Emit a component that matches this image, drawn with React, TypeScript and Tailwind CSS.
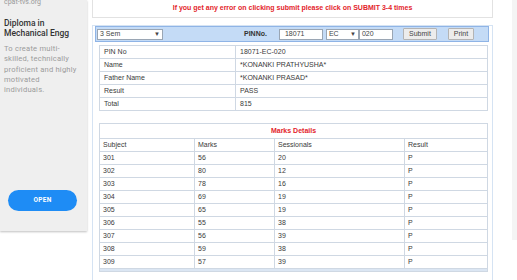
import React from "react";

const marks = [
  ["301", "56", "20", "P"],
  ["302", "80", "12", "P"],
  ["303", "78", "16", "P"],
  ["304", "69", "19", "P"],
  ["305", "65", "19", "P"],
  ["306", "55", "38", "P"],
  ["307", "56", "39", "P"],
  ["308", "59", "38", "P"],
  ["309", "57", "39", "P"],
];

const info = [
  ["PIN No", "18071-EC-020"],
  ["Name", "*KONANKI PRATHYUSHA*"],
  ["Father Name", "*KONANKI PRASAD*"],
  ["Result", "PASS"],
  ["Total", "815"],
];

export default function App() {
  return (
    <div
      className="w-[517px] h-[280px] bg-white flex overflow-hidden"
      style={{ fontFamily: '"Liberation Sans", Arial, sans-serif' }}
    >
      {/* Left card */}
      <div className="w-[87px] shrink-0">
        <div
          className="h-[231px] bg-[#efefef] shadow-[0_1px_2px_rgba(0,0,0,0.25)] px-[4px] flex flex-col"
          style={{ fontFamily: 'Roboto, "Liberation Sans", sans-serif' }}
        >
          <div className="text-[7px] text-[#999] -mt-[2px] leading-[8px]">cpat-tvs.org</div>
          <div className="mt-[13px] text-[8.5px] leading-[9.5px] text-[#333] font-medium">
            Diploma in
            <br />
            Mechanical Engg
          </div>
          <div className="mt-[6px] text-[7.6px] leading-[10.3px] text-[#9c9c9c] font-normal tracking-[0.2px]">
            To create multi-
            <br />
            skilled, technically
            <br />
            proficient and highly
            <br />
            motivated
            <br />
            individuals.
          </div>
          <div className="mt-auto mb-[20px] ml-[4px] w-[69px] h-[21px] rounded-full bg-[#1e8cf5] text-white text-[6.5px] font-bold tracking-[0.3px] flex items-center justify-center">
            OPEN
          </div>
        </div>
      </div>

      {/* Center column */}
      <div className="ml-[5px] w-[401px] shrink-0 flex flex-col">
        <div className="h-[18px] bg-white border border-t-0 border-[#e2e2e2] flex items-center justify-center text-[7px] font-bold text-[#e3242b]">
          If you get any error on clicking submit please click on SUBMIT 3-4 times
        </div>
        <div className="mt-[7px] flex-1 border border-b-0 border-[#d5e3f3] bg-white flex flex-col">
          {/* Blue bar */}
          <div className="ml-[2px] mr-[3px] h-[16px] bg-[#c4dbf6] border border-[#8fb4e6] flex items-center text-[7px] text-[#444]">
            <div className="ml-[1px] w-[66px] h-[11px] bg-white border border-[#9aa6b4] flex items-center justify-between px-[2px]">
              <span>3 Sem</span>
              <span className="text-[6px]">▼</span>
            </div>
            <span className="ml-[81px] font-bold text-[#333]">PINNo.</span>
            <div className="ml-[12px] w-[44px] h-[11px] bg-white border border-[#9aa6b4] flex items-center px-[5px]">18071</div>
            <div className="ml-[3px] w-[33px] h-[11px] bg-white border border-[#9aa6b4] flex items-center justify-between px-[2px]">
              <span>EC</span>
              <span className="text-[6px]">▼</span>
            </div>
            <div className="w-[34px] h-[11px] bg-white border border-[#9aa6b4] flex items-center px-[2px]">020</div>
            <div className="ml-[10px] w-[34px] h-[12px] bg-[#ececec] border border-[#b4b4b4] rounded-[1px] flex items-center justify-center">Submit</div>
            <div className="ml-[11px] w-[26px] h-[12px] bg-[#ececec] border border-[#b4b4b4] rounded-[1px] flex items-center justify-center">Print</div>
          </div>

          {/* Info table */}
          <table className="mt-[3px] ml-[6px] w-[389px] border-collapse text-[7px] text-[#3a3a3a]">
            <tbody>
              {info.map(([k, v]) => (
                <tr key={k} className="h-[13px]">
                  <td className="w-[136px] border border-[#cfd8e3] pl-[4px] py-0 leading-[12px]">{k}</td>
                  <td className="border border-[#cfd8e3] pl-[4px] py-0 leading-[12px]">{v}</td>
                </tr>
              ))}
            </tbody>
          </table>

          {/* Marks table */}
          <table className="mt-[12px] ml-[6px] w-[389px] border-collapse text-[7px] text-[#3a3a3a]">
            <tbody>
              <tr className="h-[15px]">
                <td colSpan={4} className="border border-[#cfd8e3] text-center font-bold text-[#e3242b] leading-[14px]">
                  Marks Details
                </td>
              </tr>
              <tr className="h-[13px]">
                <td className="w-[95px] border border-[#cfd8e3] pl-[3px] leading-[12px]">Subject</td>
                <td className="w-[80px] border border-[#cfd8e3] pl-[3px] leading-[12px]">Marks</td>
                <td className="w-[130px] border border-[#cfd8e3] pl-[3px] leading-[12px]">Sessionals</td>
                <td className="border border-[#cfd8e3] pl-[3px] leading-[12px]">Result</td>
              </tr>
              {marks.map((r) => (
                <tr key={r[0]} className="h-[13px]">
                  {r.map((c, i) => (
                    <td key={i} className="border border-[#cfd8e3] pl-[3px] leading-[12px]">
                      {c}
                    </td>
                  ))}
                </tr>
              ))}
              <tr className="h-[3px]">
                <td colSpan={4} className="border border-[#cfd8e3] bg-[#dbe6f3] p-0 h-[3px]"></td>
              </tr>
            </tbody>
          </table>
        </div>
      </div>

      {/* Right strip */}
      <div className="flex-1 flex justify-end">
        <div className="w-[5px] h-[240px] bg-[#f4f4f4]"></div>
      </div>
    </div>
  );
}
